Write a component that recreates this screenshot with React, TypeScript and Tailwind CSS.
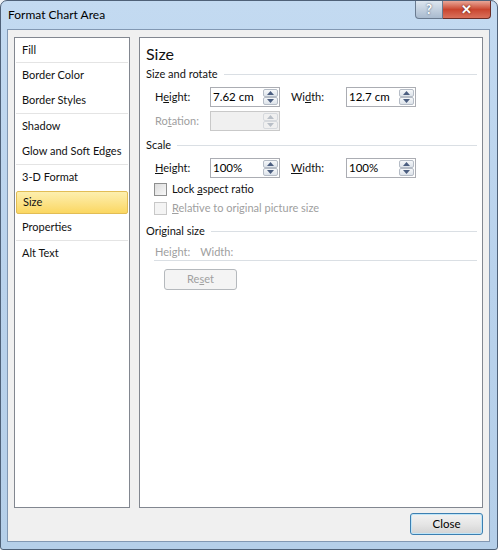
import type { ReactNode } from "react";

const listItems: { label: string; sepAfter?: boolean; active?: boolean }[] = [
  { label: "Fill", sepAfter: true },
  { label: "Border Color" },
  { label: "Border Styles", sepAfter: true },
  { label: "Shadow" },
  { label: "Glow and Soft Edges", sepAfter: true },
  { label: "3-D Format" },
  { label: "Size", active: true },
  { label: "Properties", sepAfter: true },
  { label: "Alt Text" },
];

function Arrow({ up, disabled }: { up?: boolean; disabled?: boolean }) {
  return (
    <svg width="7" height="4" viewBox="0 0 7 4">
      <path
        d={up ? "M0 4 L3.5 0 L7 4 Z" : "M0 0 L3.5 4 L7 0 Z"}
        fill={disabled ? "#b9bfc7" : "#4b5e80"}
      />
    </svg>
  );
}

function Spinner({ disabled }: { disabled?: boolean }) {
  const half = disabled
    ? "flex-1 flex items-center justify-center border border-[#d6d9dd] rounded-[2px] bg-[#f0f0f0]"
    : "flex-1 flex items-center justify-center border border-[#b5bcc6] rounded-[2px] bg-gradient-to-b from-[#f6f8fa] to-[#dde3ea]";
  return (
    <div className="flex flex-col w-[16px] py-px pr-px">
      <div className={half}>
        <Arrow up disabled={disabled} />
      </div>
      <div className={half}>
        <Arrow disabled={disabled} />
      </div>
    </div>
  );
}

function NumberBox({ value, disabled }: { value?: string; disabled?: boolean }) {
  return (
    <div
      className={`flex w-[70px] h-[20px] border ${
        disabled ? "border-[#c9c9c9] bg-[#f0f0f0]" : "border-[#abadb3] bg-white"
      }`}
    >
      <div className="flex-1 flex items-center pl-[2px] text-[11.5px] text-black">
        {value}
      </div>
      <Spinner disabled={disabled} />
    </div>
  );
}

function SectionHeader({ children }: { children: ReactNode }) {
  return (
    <div className="flex items-center h-[16px] pr-[5px] text-[11px] text-[#111]">
      <span className="whitespace-nowrap">{children}</span>
      <div className="flex-1 ml-[6px] h-px bg-[#dadfe4]" />
    </div>
  );
}

function Checkbox({ label, disabled }: { label: ReactNode; disabled?: boolean }) {
  return (
    <div className="flex items-center h-[16px] ml-[8px] text-[11px]">
      <div
        className={`w-[13px] h-[13px] border ${
          disabled
            ? "border-[#c8c8c8] bg-[#f4f4f4]"
            : "border-[#8e8f8f] bg-gradient-to-br from-[#dcdcdc] to-[#f8f8f8]"
        }`}
      />
      <span
        className={`ml-[5px] whitespace-nowrap ${disabled ? "text-[#a0a0a0]" : "text-[#111]"}`}
      >
        {label}
      </span>
    </div>
  );
}

export default function App() {
  return (
    <div className="w-[498px] h-[550px] font-['Lato',sans-serif] bg-[#eef2f6]">
      <div className="relative w-full h-full flex flex-col border border-[#4f6178] rounded-t-[7px] rounded-b-[3px] bg-gradient-to-b from-[#c3daf1] via-[#b9d2ec] to-[#b5cfe9] overflow-hidden">
        {/* title bar */}
        <div className="h-[28px] flex items-center pl-[7px] text-[12px] text-black">
          Format Chart Area
        </div>
        <div className="absolute top-0 right-[6px] flex">
          <div className="w-[28px] h-[18px] flex items-center justify-center border border-t-0 border-[#6a7b90] rounded-bl-[4px] bg-gradient-to-b from-[#dde6ef] to-[#a9bbcf] text-[13px] font-bold text-white [text-shadow:0_0_2px_#33475e]">
            ?
          </div>
          <div className="w-[48px] h-[18px] flex items-center justify-center border border-t-0 border-l-0 border-[#6b2d27] rounded-br-[4px] bg-gradient-to-b from-[#e8a597] via-[#c9452f] to-[#d9705b] text-[13px] font-bold text-white [text-shadow:0_0_2px_#50150e]">
            ✕
          </div>
        </div>

        {/* client area */}
        <div className="flex-1 ml-[6px] mr-[7px] mb-[7px] border border-[#8298b3] bg-[#f0f0f0] flex flex-col pt-[7px] pb-[6px] pl-[6px] pr-[6px]">
          <div className="flex gap-[9px] h-[471px]">
            {/* category list */}
            <div className="w-[116px] border border-[#828790] bg-white flex flex-col text-[11px] text-[#111]">
              {listItems.map((item, i) => (
                <div key={item.label}>
                  <div
                    className={`${i === 0 ? "h-[24px]" : "h-[25px]"} flex items-center whitespace-nowrap ${
                      item.active ? "px-px py-px" : "pl-[7px]"
                    }`}
                  >
                    {item.active ? (
                      <div className="w-full h-[23px] flex items-center pl-[6px] border border-[#e2bd55] rounded-[2px] bg-gradient-to-b from-[#fdefae] to-[#fbd760]">
                        {item.label}
                      </div>
                    ) : (
                      item.label
                    )}
                  </div>
                  {item.sepAfter && <div className="mx-px h-px bg-[#e4e4e4]" />}
                </div>
              ))}
            </div>

            {/* property page */}
            <div className="flex-1 border border-[#828790] bg-white flex flex-col pl-[6px] pt-[6px]">
              <div className="h-[20px] flex items-center text-[16px] text-[#111]">Size</div>

              <div className="mt-[2px]">
                <SectionHeader>Size and rotate</SectionHeader>
              </div>
              <div className="mt-[5px] flex items-center h-[20px] ml-[9px] text-[11px] text-[#111]">
                <span className="w-[55px]">
                  H<u>e</u>ight:
                </span>
                <NumberBox value="7.62 cm" />
                <span className="w-[55px] ml-[11px]">
                  Wi<u>d</u>th:
                </span>
                <NumberBox value="12.7 cm" />
              </div>
              <div className="mt-[4px] flex items-center h-[20px] ml-[9px] text-[11px] text-[#a0a0a0]">
                <span className="w-[55px]">
                  Ro<u>t</u>ation:
                </span>
                <NumberBox disabled />
              </div>

              <div className="mt-[6px]">
                <SectionHeader>Scale</SectionHeader>
              </div>
              <div className="mt-[5px] flex items-center h-[20px] ml-[9px] text-[11px] text-[#111]">
                <span className="w-[55px]">
                  <u>H</u>eight:
                </span>
                <NumberBox value="100%" />
                <span className="w-[55px] ml-[11px]">
                  <u>W</u>idth:
                </span>
                <NumberBox value="100%" />
              </div>
              <div className="mt-[3px]">
                <Checkbox
                  label={
                    <>
                      Lock <u>a</u>spect ratio
                    </>
                  }
                />
              </div>
              <div className="mt-[3px]">
                <Checkbox
                  disabled
                  label={
                    <>
                      <u>R</u>elative to original picture size
                    </>
                  }
                />
              </div>

              <div className="mt-[7px]">
                <SectionHeader>Original size</SectionHeader>
              </div>
              <div className="mt-[5px] ml-[8px] mr-[5px] h-[17px] flex items-center gap-[10px] border-b border-[#dadfe4] pl-px text-[11px] text-[#a0a0a0]">
                <span>Height:</span>
                <span>Width:</span>
              </div>
              <div className="mt-[8px] ml-[18px] w-[73px] h-[21px] flex items-center justify-center border border-[#b5b9bd] rounded-[3px] bg-[#f4f4f4] text-[11px] text-[#a0a0a0]">
                Re<u>s</u>et
              </div>
            </div>
          </div>

          <div className="mt-[5px] flex justify-end">
            <div className="w-[73px] h-[22px] flex items-center justify-center border border-[#3c7fb1] rounded-[3px] bg-gradient-to-b from-[#f2f2f2] via-[#e6e6e6] to-[#d3d3d3] shadow-[inset_0_0_0_1px_#bfe5f8] text-[11.5px] text-black">
              Close
            </div>
          </div>
        </div>
      </div>
    </div>
  );
}
